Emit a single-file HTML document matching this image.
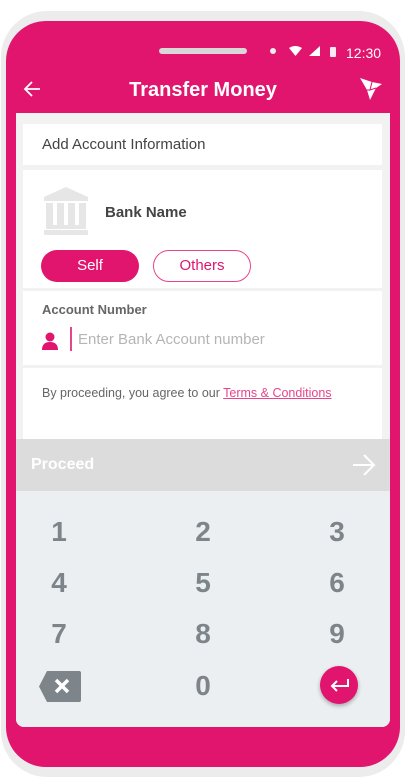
<!DOCTYPE html>
<html><head><meta charset="utf-8"><style>
*{margin:0;padding:0;box-sizing:border-box}
body{width:406px;height:778px;background:#fff;font-family:"Liberation Sans",sans-serif;position:relative;overflow:hidden}
.abs{position:absolute}
.outer{left:1px;top:11px;width:404px;height:766px;border-radius:46px;background:#ececec}
.phone{left:6px;top:21px;width:394px;height:746px;border-radius:40px;background:#e1146e}
.screen{left:16px;top:113px;width:374px;height:614px;background:#f2f2f2;border-radius:0 0 8px 8px;overflow:hidden}
.card{position:absolute;left:7px;width:359px;background:#fff}
.kp{position:absolute;font-size:28px;color:#7d858b;font-weight:bold;width:40px;text-align:center;margin-left:-20px}
</style></head><body>
<div class="abs outer"></div>
<div class="abs phone"></div>
<div class="abs" style="left:159px;top:48px;width:88px;height:6px;border-radius:3px;background:#d8d8d8"></div>
<div class="abs" style="left:270px;top:48px;width:6px;height:6px;border-radius:3px;background:#eee"></div>
<svg class="abs" style="left:288px;top:46px" width="60" height="12"><path d="M1 2 Q7 -2 14 2 L7.5 10Z" fill="#fff"/><path d="M21 10 L32 0 V10Z" fill="#fff"/><rect x="42" y="1" width="6" height="10" rx="1" fill="#fff" opacity=".9"/></svg>
<div class="abs" style="left:346px;top:45px;color:#fff;font-size:14px">12:30</div>
<svg class="abs" style="left:22px;top:80px" width="20" height="18"><path d="M18 9 H3 M10 2 L3 9 L10 16" stroke="#fff" stroke-width="1.8" fill="none"/></svg>
<div class="abs" style="left:0;width:406px;top:79px;text-align:center;color:#fff;font-size:20px;font-weight:bold">Transfer Money</div>
<svg class="abs" style="left:358px;top:76px" width="26" height="26"><path d="M2 2 L14 6 L24 8 L18 12 L12 24 L9 14Z" fill="#fff"/><path d="M14 6 L12 14 L18 12 M9 14 L12 14" stroke="#e1146e" stroke-width="1" fill="none"/></svg>
<div class="abs screen">
 <div class="card" style="top:11px;height:41px"><div style="position:absolute;left:19px;top:12px;font-size:15px;color:#444">Add Account Information</div></div>
 <div class="card" style="top:57px;height:118px">
  <svg style="position:absolute;left:21px;top:17px" width="44" height="48"><path d="M22 0 L44 10 H0Z" fill="#e6e6e6"/><rect x="0" y="10" width="44" height="4" fill="#e6e6e6"/><rect x="2" y="16" width="7" height="22" fill="#e6e6e6"/><rect x="13" y="16" width="7" height="22" fill="#e6e6e6"/><rect x="24" y="16" width="7" height="22" fill="#e6e6e6"/><rect x="35" y="16" width="7" height="22" fill="#e6e6e6"/><rect x="2" y="38" width="40" height="4" fill="#e6e6e6"/><rect x="0" y="43" width="44" height="5" rx="1" fill="#e6e6e6"/></svg>
  <div style="position:absolute;left:82px;top:34px;font-size:15px;font-weight:bold;color:#444">Bank Name</div>
  <div style="position:absolute;left:18px;top:80px;width:98px;height:32px;border-radius:16px;background:#e1146e;color:#fff;font-size:15px;text-align:center;line-height:32px">Self</div>
  <div style="position:absolute;left:130px;top:80px;width:98px;height:32px;border-radius:16px;border:1.5px solid #e8448a;color:#e1146e;font-size:15px;text-align:center;line-height:29px">Others</div>
 </div>
 <div class="card" style="top:178px;height:74px">
  <div style="position:absolute;left:19px;top:11px;font-size:13px;font-weight:bold;color:#666">Account Number</div>
  <svg style="position:absolute;left:19px;top:41px" width="16" height="18"><circle cx="8" cy="5" r="4.5" fill="#e1146e"/><path d="M0 18 Q0 10 8 10 Q16 10 16 18Z" fill="#e1146e"/></svg>
  <div style="position:absolute;left:47px;top:36px;width:2px;height:24px;background:#e8448a"></div>
  <div style="position:absolute;left:55px;top:40px;font-size:15px;color:#b5b5b5">Enter Bank Account number</div>
 </div>
 <div class="card" style="top:255px;height:72px">
  <div style="position:absolute;left:19px;top:18px;font-size:12.5px;color:#666">By proceeding, you agree to our <span style="color:#e8448a;text-decoration:underline">Terms &amp; Conditions</span></div>
 </div>
 <div style="position:absolute;left:0;top:326px;width:374px;height:52px;background:#dcdcdc">
  <div style="position:absolute;left:15px;top:17px;color:#fff;font-size:16px;font-weight:bold">Proceed</div>
  <svg style="position:absolute;left:336px;top:15px" width="24" height="22"><path d="M1 11 H22 M12 1 L22 11 L12 21" stroke="#fff" stroke-width="2" fill="none"/></svg>
 </div>
 <div style="position:absolute;left:0;top:378px;width:374px;height:236px;background:#eceff1">
  <div class="kp" style="left:43px;top:25px">1</div><div class="kp" style="left:187px;top:25px">2</div><div class="kp" style="left:321px;top:25px">3</div>
  <div class="kp" style="left:43px;top:76px">4</div><div class="kp" style="left:187px;top:76px">5</div><div class="kp" style="left:321px;top:76px">6</div>
  <div class="kp" style="left:43px;top:127px">7</div><div class="kp" style="left:187px;top:127px">8</div><div class="kp" style="left:321px;top:127px">9</div>
  <div class="kp" style="left:187px;top:179px">0</div>
  <svg style="position:absolute;left:23px;top:180px" width="42" height="31"><path d="M8 0 H40 Q42 0 42 2 V29 Q42 31 40 31 H8 L0 15.5Z" fill="#7d858b"/><path d="M17 9 L29 21 M29 9 L17 21" stroke="#fff" stroke-width="3.5"/></svg>
  <div style="position:absolute;left:304px;top:175px;width:38px;height:38px;border-radius:19px;background:#e1146e;box-shadow:0 2px 4px rgba(0,0,0,.3)"></div>
  <svg style="position:absolute;left:313px;top:185px" width="22" height="18"><path d="M19 3 V10 H3 M8 5 L3 10 L8 15" stroke="#fff" stroke-width="2" fill="none"/></svg>
 </div>
</div>
</body></html>
